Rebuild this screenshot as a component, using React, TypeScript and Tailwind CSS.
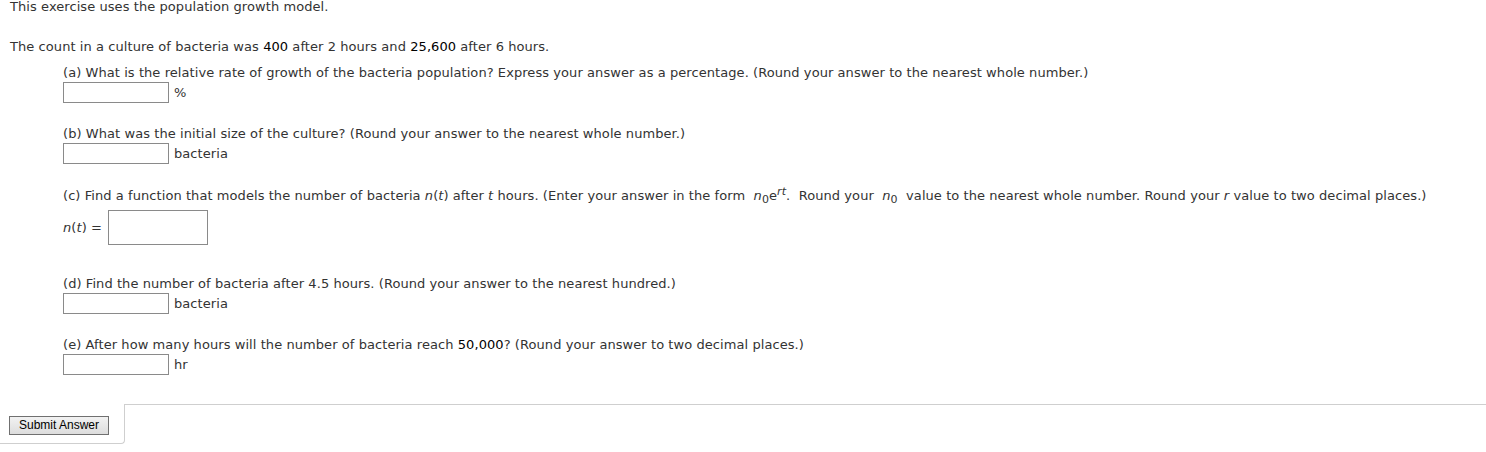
import React from 'react';

const Box = ({ className = '' }: { className?: string }) => (
  <span className={`inline-block h-[21px] w-[106px] border border-[#8a8a8a] bg-white align-middle ${className}`} />
);

const AnswerRow = ({ unit }: { unit: string }) => (
  <div className="flex h-[21px] items-center">
    <Box />
    <span className="ml-[5px]">{unit}</span>
  </div>
);

const App = () => {
  return (
    <div className="min-h-[452px] bg-white font-['DejaVu_Sans','Liberation_Sans',sans-serif] text-[13px] leading-[18px] tracking-[0.07px] text-[#333]">
      <div className="pl-[10px]">
        <p className="-mt-[2px]">This exercise uses the population growth model.</p>
        <p className="mt-[22px]">
          The count in a culture of bacteria was <span className="text-black">400</span> after 2 hours and{' '}
          <span className="text-black">25,600</span> after 6 hours.
        </p>

        <div className="ml-[53px] mt-[8px]">
          <p>
            (a) What is the relative rate of growth of the bacteria population? Express your answer as a percentage.
            (Round your answer to the nearest whole number.)
          </p>
          <AnswerRow unit="%" />

          <p className="mt-[22px]">(b) What was the initial size of the culture? (Round your answer to the nearest whole number.)</p>
          <AnswerRow unit="bacteria" />

          <p className="mt-[23px]">
            (c) Find a function that models the number of bacteria <i>n</i>(<i>t</i>) after <i>t</i> hours. (Enter your
            answer in the form&nbsp;{' '}
            <span className="italic">
              n<sub className="text-[11px] not-italic">0</sub>
            </span>
            e<sup className="text-[11px] italic">rt</sup>. &nbsp;Round your&nbsp;{' '}
            <span className="italic">
              n<sub className="text-[11px] not-italic">0</sub>
            </span>
            &nbsp; value to the nearest whole number. Round your <i>r</i> value to two decimal places.)
          </p>
          <div className="mt-[5px] flex items-center">
            <span>
              <i>n</i>(<i>t</i>) =
            </span>
            <span className="ml-[6px] inline-block h-[35px] w-[100px] border border-[#8a8a8a] bg-white" />
          </div>

          <p className="mt-[30px]">(d) Find the number of bacteria after 4.5 hours. (Round your answer to the nearest hundred.)</p>
          <AnswerRow unit="bacteria" />

          <p className="mt-[22px]">
            (e) After how many hours will the number of bacteria reach <span className="text-black">50,000</span>? (Round
            your answer to two decimal places.)
          </p>
          <AnswerRow unit="hr" />
        </div>
      </div>

      <div className="mt-[29px] flex">
        <div className="h-[40px] w-[125px] rounded-br-[4px] border-r border-b border-[#cfcfcf] pl-[9px] pt-[12px]">
          <button className="h-[19px] border border-[#707070] bg-gradient-to-b from-[#f2f2f2] to-[#dddddd] px-[9px] font-['Liberation_Sans',Arial,sans-serif] text-[12px] leading-[17px] tracking-normal text-black">
            Submit Answer
          </button>
        </div>
        <div className="flex-1 border-t border-[#cfcfcf]" />
      </div>
    </div>
  );
};

export default App;
